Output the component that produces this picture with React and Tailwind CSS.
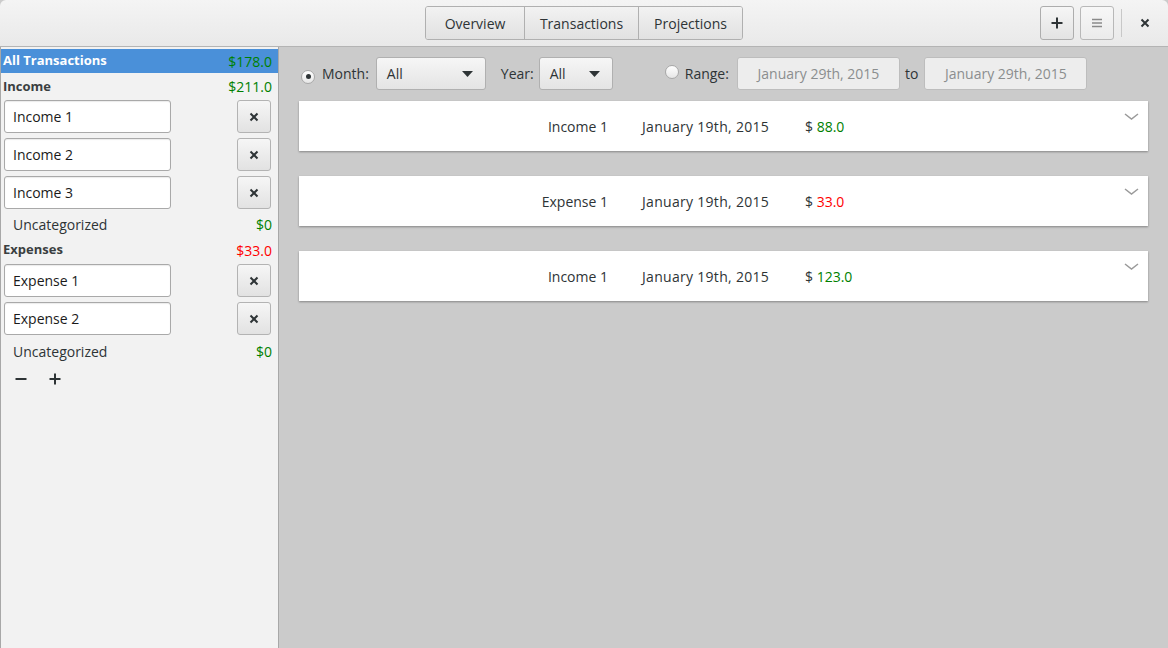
import React from "react";

const FONT = { fontFamily: '"Open Sans", "DejaVu Sans", sans-serif' };

function Radio({ checked }) {
  return (
    <span className="inline-flex h-[14px] w-[14px] items-center justify-center rounded-full border border-[#a8a8a8] bg-gradient-to-b from-[#ffffff] to-[#e6e6e6]">
      {checked && <span className="h-[5px] w-[5px] rounded-full bg-[#2e3436]" />}
    </span>
  );
}

function Caret() {
  return (
    <svg width="11" height="6" viewBox="0 0 11 6">
      <path d="M0 0 L11 0 L5.5 6 Z" fill="#2e3436" />
    </svg>
  );
}

function XIcon() {
  return (
    <svg width="10" height="10" viewBox="0 0 10 10">
      <path d="M1.5 1.5 L8.5 8.5 M8.5 1.5 L1.5 8.5" stroke="#2e3436" strokeWidth="2" />
    </svg>
  );
}

function CategoryInput({ label }) {
  return (
    <div className="flex h-[38px] items-start pl-[3px] pr-[7px]">
      <div className="flex h-[33px] w-[167px] items-center rounded-[3px] border border-[#a9a9a9] bg-white pl-[8px] text-[14px] text-[#1a1a1a] shadow-[inset_0_1px_1px_rgba(0,0,0,0.08)]">
        {label}
      </div>
      <div className="flex-1" />
      <button className="flex h-[33px] w-[34px] items-center justify-center rounded-[3px] border border-[#b3b3b3] bg-gradient-to-b from-[#f6f6f6] to-[#e2e2e2]">
        <XIcon />
      </button>
    </div>
  );
}

function Card({ name, amount, color }) {
  return (
    <div className="relative flex h-[50px] items-center bg-white text-[14px] text-[#2e3436] shadow-[0_1px_2px_rgba(0,0,0,0.35)]">
      <div className="w-[309px] text-right">{name}</div>
      <div className="ml-[34px] w-[130px] tracking-[0.3px]">January 19th, 2015</div>
      <div className="ml-[33px]">
        <span>$ </span>
        <span className={color}>{amount}</span>
      </div>
      <svg className="absolute right-[9px] top-[12px]" width="15" height="8" viewBox="0 0 15 8">
        <path d="M1 1 L7.5 6 L14 1" stroke="#9a9a9a" strokeWidth="1.5" fill="none" />
      </svg>
    </div>
  );
}

export default function App() {
  return (
    <div className="flex h-[648px] w-[1168px] flex-col overflow-hidden bg-[#cbcbcb]" style={FONT}>
      {/* Header bar */}
      <div className="relative flex h-[47px] shrink-0 items-center justify-center rounded-t-[6px] border-b border-[#b4b4b4] bg-gradient-to-b from-[#f4f4f4] to-[#e9e9e9]">
        <div className="flex h-[34px] overflow-hidden rounded-[3px] border border-[#b0b0b0] text-[14px] text-[#2e3436]">
          <button className="w-[98px] bg-gradient-to-b from-[#f2f2f2] to-[#e1e1e1]">Overview</button>
          <button className="w-[114px] border-l border-[#b0b0b0] bg-gradient-to-b from-[#f2f2f2] to-[#e1e1e1]">Transactions</button>
          <button className="w-[104px] border-l border-[#b0b0b0] bg-gradient-to-b from-[#f2f2f2] to-[#e1e1e1]">Projections</button>
        </div>
        <div className="absolute right-0 top-0 flex h-[46px] items-center">
          <button className="flex h-[34px] w-[34px] items-center justify-center rounded-[3px] border border-[#adadad] bg-gradient-to-b from-[#f6f6f6] to-[#e3e3e3]">
            <svg width="12" height="12" viewBox="0 0 12 12">
              <path d="M6 0.5 V11.5 M0.5 6 H11.5" stroke="#2e3436" strokeWidth="2" />
            </svg>
          </button>
          <button className="ml-[6px] flex h-[34px] w-[34px] items-center justify-center rounded-[3px] border border-[#b8b8b8] bg-gradient-to-b from-[#f7f7f7] to-[#ebebeb]">
            <svg width="10" height="10" viewBox="0 0 10 10">
              <path d="M0 1.5 H10 M0 5 H10 M0 8.5 H10" stroke="#8a8a8a" strokeWidth="1.3" />
            </svg>
          </button>
          <div className="ml-[7px] h-[28px] w-px bg-[#c8c8c8]" />
          <button className="ml-[16px] mr-[16px] flex h-[20px] w-[14px] items-center justify-center">
            <svg width="10" height="10" viewBox="0 0 10 10">
              <path d="M1.5 1.5 L8.5 8.5 M8.5 1.5 L1.5 8.5" stroke="#2e3436" strokeWidth="2" />
            </svg>
          </button>
        </div>
      </div>

      <div className="flex min-h-0 flex-1">
        {/* Sidebar */}
        <div className="flex w-[279px] shrink-0 flex-col border-l border-r border-[#a8a8a8] bg-[#f2f2f2] pt-[2px]">
          <div className="flex h-[24px] items-center justify-between bg-[#4a90d9] pl-[2px] pr-[6px] text-[14px]">
            <span className="text-[13px] font-bold text-white">All Transactions</span>
            <span className="text-[#008000]">$178.0</span>
          </div>
          <div className="flex h-[27px] items-center justify-between pl-[2px] pr-[6px] text-[14px]">
            <span className="text-[13px] font-bold text-[#3a3f41]">Income</span>
            <span className="text-[#008000]">$211.0</span>
          </div>
          <CategoryInput label="Income 1" />
          <CategoryInput label="Income 2" />
          <CategoryInput label="Income 3" />
          <div className="-mt-[5px] flex h-[30px] items-center justify-between pl-[12px] pr-[6px] text-[14px]">
            <span className="text-[#2e3436]">Uncategorized</span>
            <span className="text-[#008000]">$0</span>
          </div>
          <div className="flex h-[22px] items-center justify-between pl-[2px] pr-[6px] text-[14px]">
            <span className="text-[13px] font-bold text-[#3a3f41]">Expenses</span>
            <span className="text-[#ff0000]">$33.0</span>
          </div>
          <div className="h-[3px]" />
          <CategoryInput label="Expense 1" />
          <CategoryInput label="Expense 2" />
          <div className="-mt-[5px] flex h-[32px] items-center justify-between pl-[12px] pr-[6px] text-[14px]">
            <span className="text-[#2e3436]">Uncategorized</span>
            <span className="text-[#008000]">$0</span>
          </div>
          <div className="flex h-[24px] items-center gap-[22px] pl-[14px]">
            <svg width="12" height="12" viewBox="0 0 12 12">
              <path d="M0.5 6 H11.5" stroke="#2e3436" strokeWidth="2" />
            </svg>
            <svg width="12" height="12" viewBox="0 0 12 12">
              <path d="M6 0.5 V11.5 M0.5 6 H11.5" stroke="#2e3436" strokeWidth="2" />
            </svg>
          </div>
        </div>

        {/* Main */}
        <div className="flex min-w-0 flex-1 flex-col pl-[20px] pr-[20px] pt-[10px]">
          <div className="flex h-[33px] items-center text-[14px] text-[#2e3436]">
            <span className="ml-[2px]"><Radio checked /></span>
            <span className="ml-[7px]">Month:</span>
            <div className="ml-[7px] flex h-[33px] w-[110px] items-center justify-between rounded-[3px] border border-[#b0b0b0] bg-gradient-to-b from-[#f6f6f6] to-[#e4e4e4] pl-[10px] pr-[12px]">
              <span>All</span>
              <Caret />
            </div>
            <span className="ml-[15px]">Year:</span>
            <div className="ml-[5px] flex h-[33px] w-[74px] items-center justify-between rounded-[3px] border border-[#b0b0b0] bg-gradient-to-b from-[#f6f6f6] to-[#e4e4e4] pl-[10px] pr-[12px]">
              <span>All</span>
              <Caret />
            </div>
            <span className="ml-[52px]"><Radio /></span>
            <span className="ml-[6px]">Range:</span>
            <div className="ml-[8px] flex h-[33px] w-[163px] items-center justify-center rounded-[3px] border border-[#bdbdbd] bg-[#ededed] text-[#8b8e8f]">
              January 29th, 2015
            </div>
            <span className="ml-[5px]">to</span>
            <div className="ml-[6px] flex h-[33px] w-[163px] items-center justify-center rounded-[3px] border border-[#bdbdbd] bg-[#ededed] text-[#8b8e8f]">
              January 29th, 2015
            </div>
          </div>
          <div className="mt-[11px] flex flex-col gap-[25px]">
            <Card name="Income 1" amount="88.0" color="text-[#008000]" />
            <Card name="Expense 1" amount="33.0" color="text-[#ff0000]" />
            <Card name="Income 1" amount="123.0" color="text-[#008000]" />
          </div>
        </div>
      </div>
    </div>
  );
}
